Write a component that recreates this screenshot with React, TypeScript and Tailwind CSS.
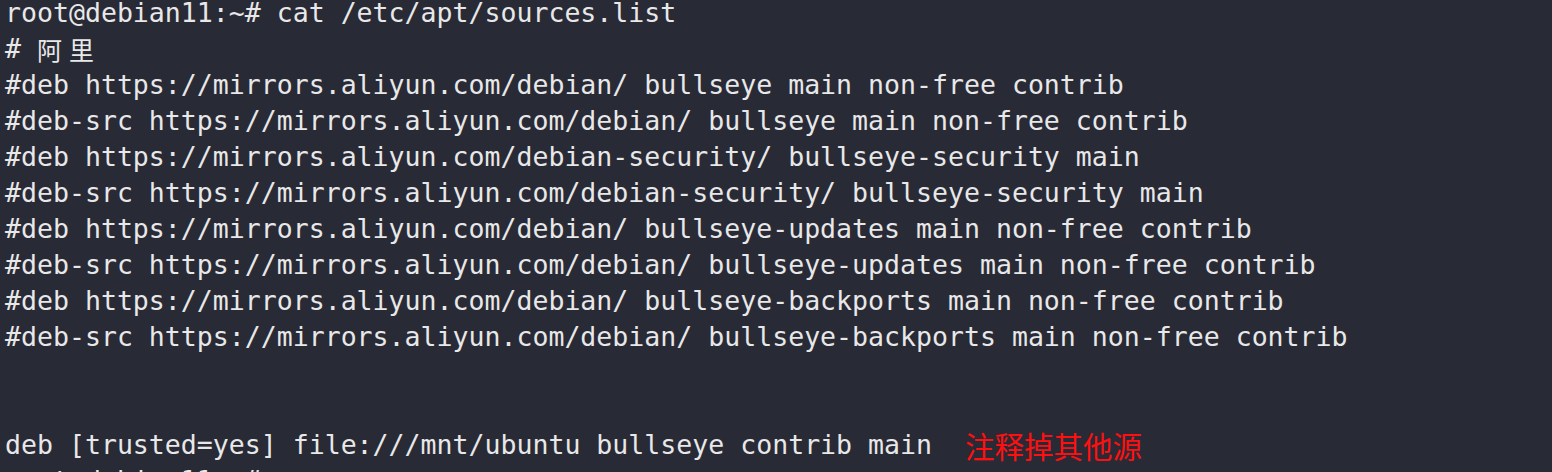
import React from "react";

const lines: string[] = [
  "root@debian11:~# cat /etc/apt/sources.list",
  "__CJK__",
  "#deb https://mirrors.aliyun.com/debian/ bullseye main non-free contrib",
  "#deb-src https://mirrors.aliyun.com/debian/ bullseye main non-free contrib",
  "#deb https://mirrors.aliyun.com/debian-security/ bullseye-security main",
  "#deb-src https://mirrors.aliyun.com/debian-security/ bullseye-security main",
  "#deb https://mirrors.aliyun.com/debian/ bullseye-updates main non-free contrib",
  "#deb-src https://mirrors.aliyun.com/debian/ bullseye-updates main non-free contrib",
  "#deb https://mirrors.aliyun.com/debian/ bullseye-backports main non-free contrib",
  "#deb-src https://mirrors.aliyun.com/debian/ bullseye-backports main non-free contrib",
  "",
  "",
  "__LAST__",
  "root@debian11:~#",
];

export default function App() {
  return (
    <div className="w-[1552px] h-[472px] overflow-hidden bg-[#282a36] text-[#e8e8e8] pl-[5px]">
      <div className="-mt-[5px] font-['DejaVu_Sans_Mono','Liberation_Mono',monospace] text-[26.56px] leading-[36px] whitespace-pre">
        {lines.map((l, i) => {
          if (l === "__CJK__") {
            return (
              <div key={i} className="h-[36px] flex items-center">
                <span>{"# "}</span>
                <span className="inline-block w-[32px] font-['Noto_Sans_CJK_SC',sans-serif] text-[25px]">阿</span>
                <span className="inline-block w-[32px] font-['Noto_Sans_CJK_SC',sans-serif] text-[25px]">里</span>
              </div>
            );
          }
          if (l === "__LAST__") {
            return (
              <div key={i} className="h-[36px] flex items-center">
                <span>deb [trusted=yes] file:///mnt/ubuntu bullseye contrib main</span>
                <span className="ml-[33px] text-[#ff1010] font-['Noto_Sans_CJK_SC',sans-serif] text-[29.5px] leading-[36px]">
                  注释掉其他源
                </span>
              </div>
            );
          }
          return (
            <div key={i} className="h-[36px]">
              {l || "\u00a0"}
            </div>
          );
        })}
      </div>
    </div>
  );
}
